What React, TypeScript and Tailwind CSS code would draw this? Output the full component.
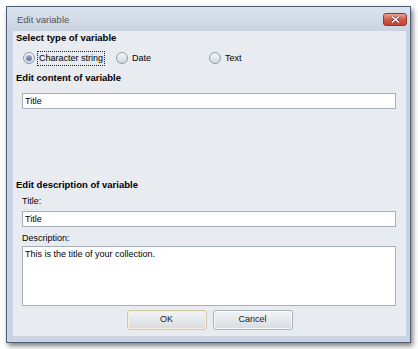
import React from "react";

function Radio({ label, checked, focused }: { label: string; checked?: boolean; focused?: boolean }) {
  return (
    <div className="flex items-center w-[93px] shrink-0">
      <span className="w-[12px] h-[12px] rounded-full border border-[#8f9bab] bg-gradient-to-b from-[#f4f6f8] to-[#d3d9e1] flex items-center justify-center shrink-0">
        {checked && <span className="w-[6px] h-[6px] rounded-full bg-gradient-to-b from-[#9fb1cc] to-[#5d7497]" />}
      </span>
      <span
        className={
          "ml-[2px] px-[1px] leading-[13px] text-[9px] text-black " +
          (focused ? "border border-dotted border-[#222]" : "border border-transparent")
        }
      >
        {label}
      </span>
    </div>
  );
}

function Field({ value, className }: { value: string; className: string }) {
  return (
    <div
      className={
        "ml-[9px] w-[374px] bg-white border border-[#a7b0bd] px-[2px] text-[9px] text-black " + className
      }
    >
      {value}
    </div>
  );
}

export default function App() {
  return (
    <div className="w-[418px] h-[349px] bg-white pt-[6px] pl-[6px]" style={{ fontFamily: '"Liberation Sans", Arial, sans-serif' }}>
      <div className="w-[405px] h-[337px] border border-[#4e5e76] bg-[#c9d3e1] flex flex-col shadow-[2px_3px_5px_rgba(0,0,0,0.5)]">
        {/* title bar */}
        <div className="h-[24px] flex items-start bg-gradient-to-b from-[#dbe3ee] to-[#c9d3e1]">
          <span className="pl-[10px] pt-[7px] text-[9.5px] leading-[12px] text-[#555]">Edit variable</span>
          <div className="ml-auto mr-[3px] mt-[6px] w-[24px] h-[13px] rounded-[3px] border border-[#8e3a32] bg-gradient-to-b from-[#e8a294] via-[#d1594a] to-[#c2402f] flex items-center justify-center">
            <svg width="9" height="7" viewBox="0 0 9 7">
              <path d="M1 0.5 L8 6.5 M8 0.5 L1 6.5" stroke="#5a1e18" strokeWidth="2.6" />
              <path d="M1 0.5 L8 6.5 M8 0.5 L1 6.5" stroke="#ffffff" strokeWidth="1.6" />
            </svg>
          </div>
        </div>

        {/* client */}
        <div className="ml-[6px] mr-[4px] mb-[6px] h-[305px] bg-[#e8ebf0] flex flex-col">
          <div className="mt-[1px] pl-[3px] h-[12px] leading-[12px] text-[9.5px] font-bold text-black">Select type of variable</div>
          <div className="mt-[6px] pl-[10px] h-[16px] flex items-center">
            <Radio label="Character string" checked focused />
            <Radio label="Date" />
            <Radio label="Text" />
          </div>
          <div className="mt-[6px] pl-[3px] h-[12px] leading-[12px] text-[9.5px] font-bold text-black">Edit content of variable</div>
          <Field value="Title" className="mt-[9px] h-[16px] leading-[14px]" />

          <div className="mt-[70px] pl-[3px] h-[12px] leading-[12px] text-[9.5px] font-bold text-black">Edit description of variable</div>
          <div className="mt-[4px] pl-[9px] h-[12px] leading-[12px] text-[9px] text-black">Title:</div>
          <Field value="Title" className="mt-[4px] h-[16px] leading-[14px]" />
          <div className="mt-[5px] pl-[9px] h-[12px] leading-[12px] text-[9px] text-black">Description:</div>
          <Field value="This is the title of your collection." className="mt-[2px] h-[60px] leading-[14px]" />

          <div className="mt-[4px] flex justify-center gap-[6px]">
            <button className="w-[80px] h-[20px] rounded-[3px] border border-[#d4c7a4] bg-gradient-to-b from-[#f3f4f6] to-[#d8dce2] text-[9px] text-[#222] shadow-[inset_0_0_0_1px_#f6f0dc]">
              OK
            </button>
            <button className="w-[80px] h-[20px] rounded-[3px] border border-[#aab2bd] bg-gradient-to-b from-[#f3f4f6] to-[#d8dce2] text-[9px] text-[#222] shadow-[inset_0_0_0_1px_#f7f8fa]">
              Cancel
            </button>
          </div>
        </div>
      </div>
    </div>
  );
}
